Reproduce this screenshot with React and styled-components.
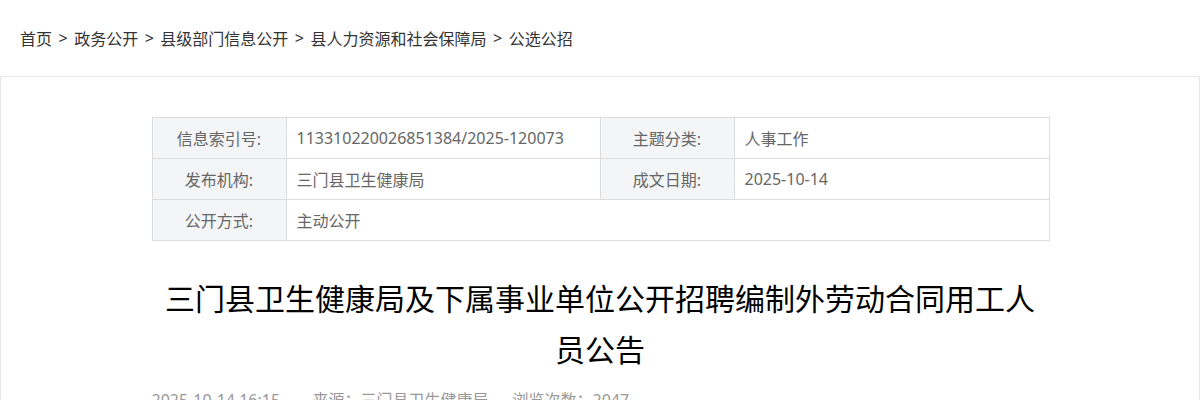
import React from "react";
import styled, { createGlobalStyle } from "styled-components";

const Global = createGlobalStyle`
  html, body { margin: 0; padding: 0; background: #fff; }
  body { font-family: "Noto Sans", "Noto Sans CJK SC", sans-serif; color: #333; }
`;

const Page = styled.div`
  width: 1200px;
`;

const Breadcrumb = styled.nav`
  height: 76px;
  display: flex;
  align-items: center;
  padding-left: 20px;
  font-size: 16px;
  color: #333;
  box-sizing: border-box;
`;

const Sep = styled.span`
  margin: 0 6.5px;
`;

const Main = styled.main`
  border: 1px solid #e8e8e8;
  border-bottom: none;
  padding: 40px 0 0;
  min-height: 400px;
  box-sizing: border-box;
`;

const Inner = styled.div`
  width: 897px;
  margin: 0 auto;
`;

const Table = styled.table`
  width: 897px;
  border-collapse: collapse;
  table-layout: fixed;
  font-size: 16px;
  color: #666;
`;

const Label = styled.td`
  height: 40px;
  background: #f4f5f7;
  border: 1px solid #dcdcdc;
  text-align: center;
  padding: 0;
`;

const Value = styled.td`
  height: 40px;
  border: 1px solid #dcdcdc;
  padding: 0 0 0 10px;
  text-align: left;
`;

const Title = styled.h1`
  margin: 31px 0 0;
  font-size: 30px;
  line-height: 51px;
  font-weight: normal;
  color: #000;
  text-align: center;
  font-family: "Noto Sans CJK SC", "Noto Sans", sans-serif;
`;

const Meta = styled.div`
  margin-top: 14px;
  font-size: 16px;
  line-height: 24px;
  color: #999;
  display: flex;
`;

const MetaItem = styled.span`
  width: ${(p) => p.$w}px;
  white-space: nowrap;
`;

const crumbs = ["首页", "政务公开", "县级部门信息公开", "县人力资源和社会保障局", "公选公招"];

export default function App() {
  return (
    <Page>
      <Global />
      <Breadcrumb>
        {crumbs.map((c, i) => (
          <React.Fragment key={c}>
            {i > 0 && <Sep>&gt;</Sep>}
            <span>{c}</span>
          </React.Fragment>
        ))}
      </Breadcrumb>
      <Main>
        <Inner>
          <Table>
            <colgroup>
              <col style={{ width: 134 }} />
              <col style={{ width: 314 }} />
              <col style={{ width: 134 }} />
              <col style={{ width: 315 }} />
            </colgroup>
            <tbody>
              <tr>
                <Label>信息索引号:</Label>
                <Value>113310220026851384/2025-120073</Value>
                <Label>主题分类:</Label>
                <Value>人事工作</Value>
              </tr>
              <tr>
                <Label>发布机构:</Label>
                <Value>三门县卫生健康局</Value>
                <Label>成文日期:</Label>
                <Value>2025-10-14</Value>
              </tr>
              <tr>
                <Label>公开方式:</Label>
                <Value colSpan={3}>主动公开</Value>
              </tr>
            </tbody>
          </Table>
          <Title>三门县卫生健康局及下属事业单位公开招聘编制外劳动合同用工人员公告</Title>
          <Meta>
            <MetaItem $w={161}>2025-10-14 16:15</MetaItem>
            <MetaItem $w={200}>来源：三门县卫生健康局</MetaItem>
            <MetaItem $w={200}>浏览次数：2047</MetaItem>
          </Meta>
        </Inner>
      </Main>
    </Page>
  );
}
